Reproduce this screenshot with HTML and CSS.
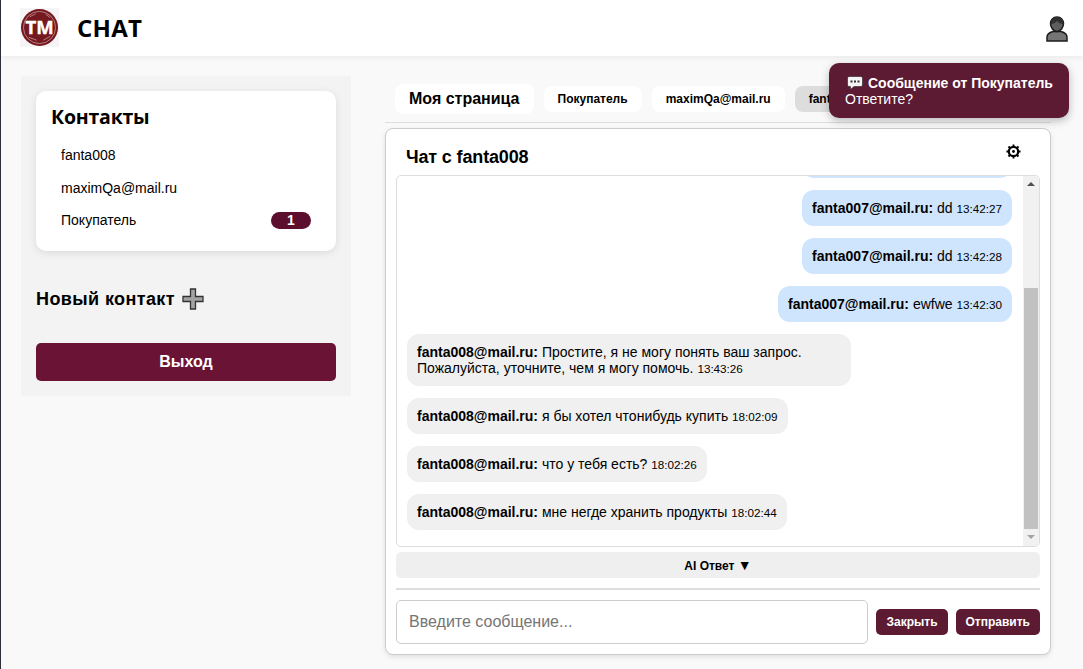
FILE: index.html
```html
<!DOCTYPE html>
<html lang="ru">
<head>
<meta charset="utf-8">
<title>CHAT</title>
<link rel="stylesheet" href="styles.css">
</head>
<body>
<div class="page">
  <header class="topbar">
    <svg class="logo" viewBox="0 0 40 40" width="39" height="39">
      <rect width="40" height="40" fill="#f6f4f4"/>
      <circle cx="20" cy="20" r="19" fill="#74191f"/>
      <circle cx="20" cy="20" r="16.500" fill="none" stroke="#c99a9c" stroke-width="0.800"/>
      <path d="M9 30l8 3M24 33l7-4M10 9l6-3M26 6l5 4" stroke="#c99a9c" stroke-width="0.800" fill="none"/>
      <text x="20" y="27" text-anchor="middle" class="logo-text">TM</text>
    </svg>
    <h1 class="brand">CHAT</h1>
    <svg class="user-icon" viewBox="0 0 22 26" width="22" height="26">
      <path d="M1 25v-4c0-3 2.500-4.500 6-5.500h8c3.500 1 6 2.500 6 5.500v4z" fill="#757575" stroke="#1c1c1c" stroke-width="1.500"/>
      <path d="M11 1C7 1 4.500 4 4.500 7.500S7 15.500 11 15.500s6.500-4.500 6.500-8S15 1 11 1z" fill="#5e5e5e" stroke="#1c1c1c" stroke-width="1.500"/>
      <path d="M4.500 8c2.500 0 5-1 6.500-3 1.500 2 3.500 3 6.500 3 0-4-2.500-7-6.500-7S4.500 4 4.500 8z" fill="#303030"/>
    </svg>
  </header>
  <div class="content">
    <aside class="sidebar">
      <section class="contacts">
        <h2 class="contacts-title">Контакты</h2>
        <div class="contact">fanta008</div>
        <div class="contact">maximQa@mail.ru</div>
        <div class="contact">Покупатель<span class="badge">1</span></div>
      </section>
      <div class="new-contact">Новый контакт
        <svg class="plus" viewBox="0 0 22 22" width="22" height="22"><path d="M8.500 1h5v7.500H21v5h-7.500V21h-5v-7.500H1v-5h7.500z" fill="#a3a3a3" stroke="#333" stroke-width="1.300"/></svg>
      </div>
      <button class="logout">Выход</button>
    </aside>
    <main class="main">
      <nav class="tabs">
        <div class="tab tab-home">Моя страница</div>
        <div class="tab">Покупатель</div>
        <div class="tab">maximQa@mail.ru</div>
        <div class="tab tab-active">fanta008</div>
      </nav>
      <section class="chat">
        <div class="chat-head">
          <h3 class="chat-title">Чат с fanta008</h3>
          <svg class="gear" viewBox="0 0 16 16" width="15" height="15">
            <circle cx="8" cy="8" r="5" fill="none" stroke="#000" stroke-width="2.400"/>
            <circle cx="8" cy="8" r="1.500" fill="#000"/>
            <path d="M8 0.500v2.500M8 13v2.500M0.500 8H3M13 8h2.500M2.700 2.700l1.800 1.800M11.500 11.500l1.800 1.800M13.300 2.700l-1.800 1.800M4.500 11.500l-1.800 1.800" stroke="#000" stroke-width="2"/>
          </svg>
        </div>
        <div class="messages">
          <div class="msg-list">
            <div class="msg msg-out"><b>fanta007@mail.ru:</b> dd <small>13:42:26</small></div>
            <div class="msg msg-out"><b>fanta007@mail.ru:</b> dd <small>13:42:27</small></div>
            <div class="msg msg-out"><b>fanta007@mail.ru:</b> dd <small>13:42:28</small></div>
            <div class="msg msg-out"><b>fanta007@mail.ru:</b> ewfwe <small>13:42:30</small></div>
            <div class="msg msg-in"><b>fanta008@mail.ru:</b> Простите, я не могу понять ваш запрос. Пожалуйста, уточните, чем я могу помочь. <small>13:43:26</small></div>
            <div class="msg msg-in"><b>fanta008@mail.ru:</b> я бы хотел чтонибудь купить <small>18:02:09</small></div>
            <div class="msg msg-in"><b>fanta008@mail.ru:</b> что у тебя есть? <small>18:02:26</small></div>
            <div class="msg msg-in"><b>fanta008@mail.ru:</b> мне негде хранить продукты <small>18:02:44</small></div>
          </div>
          <div class="scrollbar">
            <span class="arrow arrow-up"></span>
            <span class="track"><span class="thumb"></span></span>
            <span class="arrow arrow-down"></span>
          </div>
        </div>
        <button class="ai-btn">AI Ответ <span class="ai-caret">▼</span></button>
        <div class="divider"></div>
        <div class="composer">
          <input class="input" type="text" placeholder="Введите сообщение...">
          <button class="send">Закрыть</button>
          <button class="send">Отправить</button>
        </div>
      </section>
    </main>
  </div>
  <div class="toast">
    <div class="toast-title">
      <svg class="toast-icon" viewBox="0 0 16 16" width="16" height="16">
        <path d="M2 1.500h12a1.500 1.500 0 0 1 1.500 1.500v7a1.500 1.500 0 0 1-1.500 1.500H7l-3.500 3v-3H2A1.500 1.500 0 0 1 .5 10V3A1.500 1.500 0 0 1 2 1.500z" fill="#f4f4f4" stroke="#222" stroke-width="0.600"/>
        <rect x="3.500" y="5.500" width="2" height="2" fill="#333"/><rect x="7" y="5.500" width="2" height="2" fill="#333"/><rect x="10.500" y="5.500" width="2" height="2" fill="#333"/>
      </svg>
      Сообщение от Покупатель
    </div>
    <div class="toast-text">Ответите?</div>
  </div>
</div>
</body>
</html>
```
FILE: styles.css
```css
* { box-sizing: border-box; }
html, body { margin: 0; padding: 0; height: 100%; overflow: hidden; }
body { font-family: "Liberation Sans", Arial, sans-serif; color: #000; background: #f9f9f9; }
button { font-family: inherit; border: none; cursor: pointer; }

.page { position: relative; height: 669px; border-left: 1px solid #2b2f3a; }

.topbar { height: 56px; background: #fff; display: flex; align-items: center; padding: 0 16px 0 19px; box-shadow: 0 2px 6px rgba(0,0,0,.06); }
.logo { display: block; margin-top: -1px; }
.logo-text { font: 700 19px "Open Sans", sans-serif; fill: #fff; stroke: #fff; stroke-width: .4px; }
.brand { margin: 0 0 0 18px; font: 700 24px/1 "Open Sans", sans-serif; letter-spacing: .3px; }
.user-icon { margin-left: auto; margin-top: 2px; margin-right: -1px; }

.content { display: flex; align-items: flex-start; padding: 20px 32px 0 20px; }

.sidebar { width: 330px; height: 320px; background: #f3f3f3; padding: 15px; flex: none; }
.contacts { height: 160px; background: #fff; border-radius: 10px; padding: 12px 15px 0; box-shadow: 0 2px 8px rgba(0,0,0,.1); }
.contacts-title { margin: 0 0 9px; font: 700 19.500px/27px "Open Sans", sans-serif; letter-spacing: -.2px; }
.contact { display: flex; align-items: center; justify-content: space-between; height: 32.500px; padding: 0 10px; font-size: 14px; }
.badge { width: 40px; height: 17px; line-height: 17px; border-radius: 9px; background: #5c0e2e; color: #fff; font-size: 14px; font-weight: 700; text-align: center; }

.new-contact { display: flex; align-items: center; gap: 7px; margin-top: 36px; height: 24px; font-size: 18px; font-weight: 700; letter-spacing: .4px; }
.logout { display: block; width: 100%; height: 38px; margin-top: 32px; background: #6b1335; color: #fff; border-radius: 5px; font-size: 16px; font-weight: 700; }

.main { width: 666px; margin-left: 34px; margin-top: 8px; flex: none; }
.tabs { display: flex; align-items: center; gap: 10px; height: 39px; padding-left: 10px; border-bottom: 1px solid #ddd; padding-bottom: 9px; }
.tab { height: 26px; line-height: 26px; padding: 0 14px; background: #fff; border-radius: 8px; font-size: 12px; font-weight: 700; white-space: nowrap; }
.tab-home { height: 30px; line-height: 30px; font-size: 16px; padding: 0 14px; }
.tab-active { background: #ddd; }

.chat { height: 527px; margin-top: 5px; background: #fff; border: 1px solid #ccc; border-radius: 8px; padding: 0 10px; box-shadow: 0 2px 5px rgba(0,0,0,.1); }
.chat-head { display: flex; justify-content: space-between; height: 46px; padding: 18px 19px 0 10px; }
.chat-title { margin: 0; font-size: 18px; line-height: 21px; font-weight: 700; letter-spacing: -.15px; }
.gear { margin-top: -3px; }

.messages { display: flex; height: 372px; border: 1px solid #ddd; border-radius: 5px; overflow: hidden; }
.msg-list { flex: 1; min-width: 0; display: flex; flex-direction: column; justify-content: flex-end; gap: 12px; padding: 0 11px 16px 10px; overflow: hidden; }
.msg { flex: none; max-width: 444px; padding: 10px; border-radius: 12px; font-size: 14px; line-height: 16px; }
.msg small { font-size: 11.700px; line-height: 1; }
.msg-out { align-self: flex-end; background: #cfe5fd; }
.msg-in { align-self: flex-start; background: #f0f0f0; }

.scrollbar { width: 16px; flex: none; display: flex; flex-direction: column; background: #f1f1f1; }
.arrow { flex: none; height: 17px; position: relative; }
.arrow::after { content: ""; position: absolute; left: 4px; border-left: 4px solid transparent; border-right: 4px solid transparent; }
.arrow-up::after { top: 6px; border-bottom: 4px solid #505050; }
.arrow-down::after { top: 6px; border-top: 4px solid #a3a3a3; }
.track { flex: 1; display: flex; flex-direction: column; justify-content: flex-end; padding: 0 1px; }
.thumb { height: 241px; background: #c1c1c1; }

.ai-btn { display: block; width: 100%; height: 26px; margin-top: 5px; background: #efefef; border-radius: 5px; font-size: 12px; font-weight: 700; }
.ai-caret { font-size: 14px; line-height: 1; vertical-align: 0; }
.divider { height: 2px; margin-top: 10px; background: #ddd; }
.composer { display: flex; align-items: center; gap: 8px; margin-top: 10px; }
.input { flex: 1; min-width: 0; height: 44px; padding: 0 12px; border: 1px solid #ccc; border-radius: 5px; background: #fff; font-family: inherit; font-size: 16px; color: #000; outline: none; }
.input::placeholder { color: #757575; }
.send { flex: none; height: 26px; padding: 0 10px; background: #5c1a33; color: #fff; border-radius: 5px; font-size: 12px; font-weight: 700; }

.toast { position: absolute; left: 828px; top: 63px; width: 240px; height: 55px; padding: 12px 16px; background: #5c1a33; color: #fff; border-radius: 10px; font-size: 14px; line-height: 16px; box-shadow: 0 3px 8px rgba(0,0,0,.25); }
.toast-title { display: flex; align-items: center; gap: 5px; font-weight: 700; padding-left: 2px; white-space: nowrap; }
.toast-icon { flex: none; }
```
